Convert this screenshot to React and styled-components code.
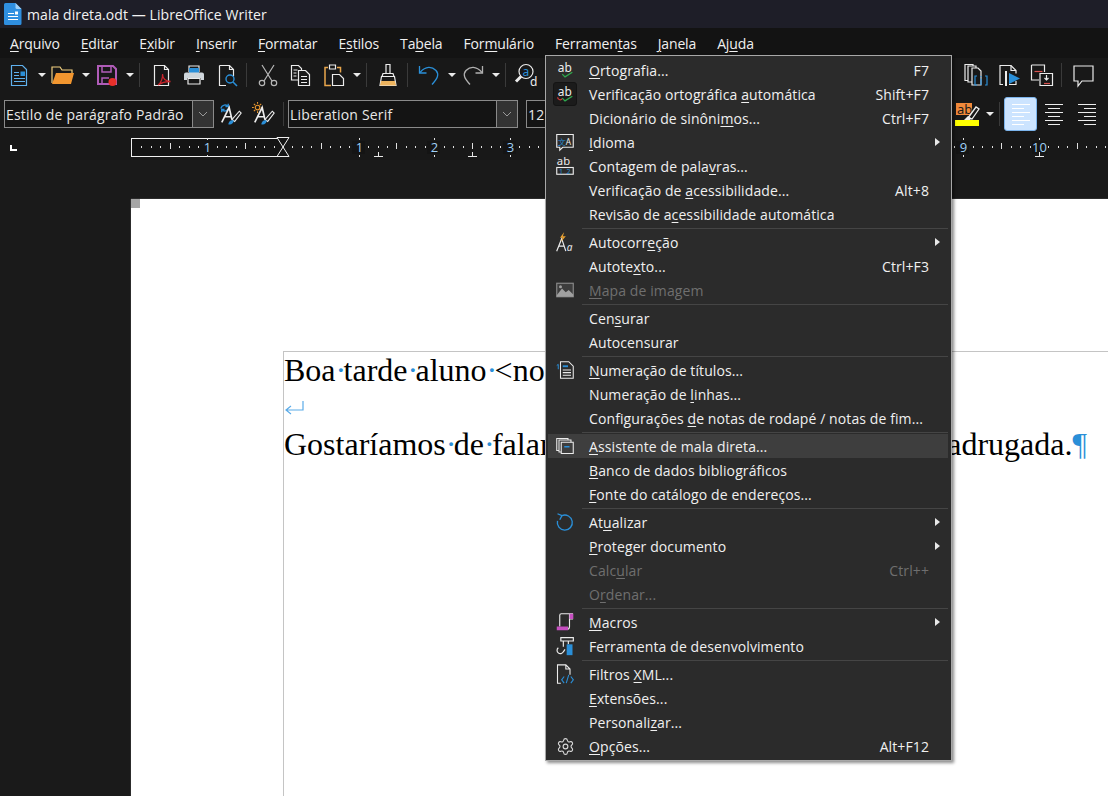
import React from "react";
import styled, { createGlobalStyle } from "styled-components";
import { Settings } from "lucide-react";

const Global = createGlobalStyle`
  html, body { margin: 0; padding: 0; background: #1a1a1a; }
  body { font-family: "Open Sans", "Noto Sans", sans-serif; overflow: hidden; }
`;

const BLUE = "#2a8fd8";
const WHITE = "#ececec";

const Screen = styled.div`
  position: relative;
  width: 1108px;
  height: 796px;
  display: flex;
  flex-direction: column;
  overflow: hidden;
  background: #1a1a1a;
`;

const TitleBar = styled.header`
  height: 28px;
  background: #1e1e28;
  display: flex;
  align-items: center;
  gap: 5px;
  padding-left: 4px;
  color: #f2f2f2;
  font-size: 14px;
  letter-spacing: 0.08px;
`;

const MenuBar = styled.nav`
  height: 30px;
  background: #131313;
  display: flex;
  align-items: center;
  gap: 21px;
  padding-left: 10px;
  color: #f0f0f0;
  font-size: 14px;
  letter-spacing: -0.14px;
`;

const Acc = styled.span`
  text-decoration: underline;
  text-decoration-thickness: 1px;
  text-underline-offset: 2px;
`;

const Toolbar = styled.div`
  display: flex;
  align-items: center;
  justify-content: space-between;
  background: #181818;
  box-sizing: border-box;
  height: ${(p) => p.$h}px;
  padding: ${(p) => p.$t || 0}px ${(p) => p.$r}px 0 ${(p) => p.$l}px;
`;

const ToolGroup = styled.div`
  display: flex;
  align-items: center;
`;

const Btn = styled.div`
  width: ${(p) => p.$w || 24}px;
  height: 24px;
  margin: 0 4px 0 5px;
  flex: none;
  display: flex;
  align-items: center;
  justify-content: center;
`;

const Drop = styled.div`
  width: 10px;
  margin: 0 -1px 0 2px;
  flex: none;
  height: 5px;
  display: flex;
  justify-content: center;
  &::before {
    content: "";
    border-left: 4px solid transparent;
    border-right: 4px solid transparent;
    border-top: 4px solid #eaeaea;
  }
`;

const Sep = styled.div`
  width: 1px;
  height: 24px;
  background: #3a3a3a;
  flex: none;
  margin: 0 ${(p) => p.$r ?? 4}px 0 ${(p) => p.$l ?? 3}px;
`;

const Combo = styled.div`
  width: ${(p) => p.$w}px;
  height: 28px;
  margin-left: ${(p) => p.$ml || 0}px;
  box-sizing: border-box;
  border: 1px solid #8a8a8a;
  display: flex;
  align-items: center;
  flex: none;
  color: #e8e8e8;
  font-size: 14px;
  letter-spacing: 0.18px;
  padding-left: 1px;
  background: #141414;
`;

const ComboText = styled.span`
  flex: 1;
  white-space: nowrap;
  overflow: hidden;
`;

const ComboArrow = styled.div`
  width: 21px;
  height: 26px;
  box-sizing: border-box;
  border-left: 1px solid #8a8a8a;
  background: #333;
  display: flex;
  align-items: center;
  justify-content: center;
  flex: none;
`;

const AlignBtn = styled.div`
  width: 33px;
  height: 34px;
  box-sizing: border-box;
  flex: none;
  display: flex;
  align-items: center;
  justify-content: center;
  border-radius: 3px;
  background: ${(p) => (p.$on ? "#cce4ff" : "transparent")};
  border: 1px solid ${(p) => (p.$on ? "#7cb4ec" : "transparent")};
`;

const RulerRow = styled.div`
  height: 28px;
  background: #181818;
  flex: none;
`;

const Workspace = styled.main`
  flex: 1;
  display: flex;
  padding: 39px 0 0 131px;
  background: #1a1a1a;
  min-height: 0;
`;

const Page = styled.section`
  flex: 1;
  position: relative;
  background: #fff;
  padding: 152px 0 0 152px;
  box-shadow: 0 -1px 0 #2c2c2c, -1px 0 0 #2c2c2c;
`;

const Corner = styled.div`
  position: absolute;
  left: 0;
  top: 0;
  width: 9px;
  height: 9px;
  background: #a6a6a6;
`;

const Frame = styled.div`
  height: 100%;
  box-sizing: border-box;
  border-top: 1px solid #c4c4c4;
  border-left: 1px solid #c4c4c4;
  font-family: "Liberation Serif", serif;
  font-size: 32px;
  color: #000;
`;

const Line = styled.div`
  height: 37px;
  line-height: 37px;
  white-space: nowrap;
  display: flex;
  justify-content: space-between;
  width: ${(p) => p.$w || "auto"};
`;

const Dot = styled.span`
  display: inline-block;
  width: 8px;
  text-align: center;
  color: ${BLUE};
`;

const Pilcrow = styled.span`
  color: ${BLUE};
`;

const BreakRow = styled.div`
  height: 37px;
  display: flex;
  align-items: center;
  padding-left: 1px;
`;

const Menu = styled.div`
  position: absolute;
  left: 545px;
  top: 55px;
  width: 407px;
  box-sizing: border-box;
  padding: 3px 3px 2px 2px;
  background: #2b2b2b;
  border: 1px solid #a8a8a8;
  box-shadow: 2px 2px 3px rgba(0, 0, 0, 0.45);
  color: #f0f0f0;
  font-size: 14px;
  letter-spacing: 0.1px;
`;

const Row = styled.div`
  height: 24px;
  display: flex;
  align-items: center;
  margin-top: ${(p) => (p.$first ? -1 : 0)}px;
  color: ${(p) => (p.$off ? "#6f6f6f" : "inherit")};
  background: ${(p) => (p.$hover ? "#3e3e3e" : "transparent")};
`;

const IconSlot = styled.div`
  width: 24px;
  height: 24px;
  margin: 0 12px 0 5px;
  flex: none;
  box-sizing: border-box;
  display: flex;
  align-items: center;
  justify-content: center;
  border-radius: 3px;
  background: ${(p) => (p.$checked ? "#1b1b1b" : "transparent")};
  border: 1px solid ${(p) => (p.$checked ? "#141414" : "transparent")};
`;

const Label = styled.span`
  flex: 1;
  white-space: nowrap;
`;

const Shortcut = styled.span`
  margin-right: 19px;
  white-space: nowrap;
`;

const Arrow = styled.span`
  width: 0;
  height: 0;
  margin-right: 8px;
  border-top: 4px solid transparent;
  border-bottom: 4px solid transparent;
  border-left: 5px solid #e8e8e8;
`;

const Divider = styled.div`
  height: 1px;
  margin: 1.5px 0 1.5px 34px;
  background: #454545;
`;

const Icon = ({ s = 24, children }) => (
  <svg width={s} height={s} viewBox="0 0 24 24" fill="none" stroke={WHITE} strokeWidth="1.2" overflow="visible">
    {children}
  </svg>
);

const Glyph = ({ x, y, size = 10, fill = WHITE, children, italic }) => (
  <text x={x} y={y} fontSize={size} fill={fill} stroke="none" fontFamily="Noto Sans, sans-serif" fontStyle={italic ? "italic" : "normal"}>
    {children}
  </text>
);

const DocIcon = () => (
  <svg width="18" height="22" viewBox="0 0 18 22">
    <path d="M1.5 0h10L17.5 6v14.5a1.5 1.5 0 0 1-1.5 1.5H1.5A1.5 1.5 0 0 1 0 20.5V1.5A1.5 1.5 0 0 1 1.5 0z" fill="#2f8fe0" />
    <path d="M11.5 0v4.5A1.5 1.5 0 0 0 13 6h4.5z" fill="#9fd0f7" />
    <path d="M4 10.5h6M4 13.5h10M4 16.5h10" stroke="#fff" strokeWidth="1.2" />
    <rect x="11" y="8.5" width="3" height="3" fill="#fff" />
  </svg>
);

const NewDoc = () => (
  <Icon>
    <path d="M4.5 2.5h11l4 4v16h-15z" stroke="#5fb1ee" />
    <path d="M7 9.5h5M7 12.5h5M7 15.5h11M7 18.5h11" stroke="#5fb1ee" />
    <rect x="13.5" y="8.5" width="4.5" height="4.5" fill="#2a8fd8" stroke="none" />
  </Icon>
);

const OpenIcon = () => (
  <Icon>
    <path d="M1 20V4h8l2 3h10v3" stroke="#f2d080" fill="none" />
    <path d="M5 10h18l-3 11H1z" fill="#f2962f" stroke="none" />
  </Icon>
);

const SaveIcon = () => (
  <Icon>
    <path d="M3 3h15l3 3v15H3z" stroke="#b05cb8" strokeWidth="2" fill="none" />
    <path d="M7 3v6h9V3" stroke="#b05cb8" strokeWidth="1.5" />
    <path d="M7 21v-6h7" stroke="#b05cb8" strokeWidth="1.5" />
    <circle cx="17.5" cy="19" r="4" fill="#e8302a" stroke="none" />
  </Icon>
);

const PdfIcon = () => (
  <Icon>
    <path d="M5.5 2.5h10l4 4v16h-14z" />
    <path d="M15.5 2.5v4h4" />
    <path d="M9 22c3-2 5-7 4.500-11 0 4 3 7 8 7.500-5 0-9 1-12.500 3.500z" stroke="#c8252c" strokeWidth="1.3" fill="#181818" />
  </Icon>
);

const PrintIcon = () => (
  <Icon>
    <path d="M7 9V3h10v6" stroke={WHITE} />
    <rect x="7" y="5" width="10" height="5" fill="#2a8fd8" stroke="none" />
    <path d="M4 9.500h16a2 2 0 0 1 2 2V17h-3v-2H5v2H2v-5.500a2 2 0 0 1 2-2z" fill="#cfd6db" stroke="none" />
    <path d="M6 15.500h12V21H6z" />
  </Icon>
);

const PreviewIcon = () => (
  <Icon>
    <path d="M4.500 2.500h10l4 4v7M11 22.500H4.500v-20" />
    <path d="M14.500 2.500v4h4" />
    <circle cx="15" cy="16" r="4" stroke={BLUE} strokeWidth="1.4" />
    <path d="M18 19l4 4" stroke={BLUE} strokeWidth="1.6" />
  </Icon>
);

const ScissorsIcon = () => (
  <Icon>
    <g stroke="#b8b8b8" strokeWidth="1.2">
      <path d="M6 2l10 16M18 2L8 18" />
      <circle cx="6" cy="20" r="2.700" />
      <circle cx="18" cy="20" r="2.700" />
    </g>
  </Icon>
);

const CopyIcon = () => (
  <Icon>
    <path d="M9 17H2.500V2.500h7l3 3v2" />
    <path d="M9.500 7.500h7l4 4v11h-11z" />
    <path d="M4.500 7h4M4.500 10h3M4.500 13h3M12 13.500h6M12 16.500h6M12 19.500h6" />
  </Icon>
);

const PasteIcon = () => (
  <Icon>
    <path d="M9 22.500H3V4.500h3M15 4.500h3.500v5" stroke="#e9a64c" strokeWidth="1.500" />
    <path d="M7.500 2h6v4h-6z" stroke={WHITE} />
    <path d="M10.500 11.500h7l4 4v7h-11z" stroke={WHITE} fill="#181818" />
  </Icon>
);

const BrushIcon = () => (
  <Icon>
    <path d="M10 1.500h4v9h-4z" stroke={WHITE} />
    <path d="M7 10.500h10l1 3H6z" stroke={WHITE} fill="#181818" />
    <path d="M5.500 13.500h13l1.500 9H4z" stroke={WHITE} fill="#181818" />
    <path d="M5 18h14l1 4.500H4z" fill="#eeb45e" stroke="none" />
  </Icon>
);

const UndoIcon = ({ stroke = BLUE, flip }) => (
  <Icon>
    <g transform={flip ? "translate(24 0) scale(-1 1)" : undefined} stroke={stroke} strokeWidth="1.300">
      <path d="M3 9.500c6-7 12-6 16-2 3.500 4 1.500 8-4 14" />
      <path d="M2.500 3v7h7" />
    </g>
  </Icon>
);

const FindIcon = () => (
  <Icon>
    <circle cx="11" cy="8.500" r="7" />
    <path d="M6 13.500l-5 5" strokeWidth="3" />
    <Glyph x="7.500" y="12.500" size="12" fill={BLUE}>a</Glyph>
    <Glyph x="15" y="22.500" size="12">d</Glyph>
  </Icon>
);

const CombineIcon = () => (
  <Icon>
    <path d="M1 1.500h8v16H1z" />
    <path d="M4 3h8v16H4z" fill="#181818" />
    <path d="M8 5h6l3 3v14H8z" fill="#181818" />
    <path d="M13 13h-2v9h2M21 13h2v9h-2M17 13v1M17 15.500V22" stroke={BLUE} />
  </Icon>
);

const ShowIcon = () => (
  <Icon>
    <path d="M6 21.500H3v-19h11l5 5v3M19 18v3.500h-7" />
    <path d="M14 2.500v5h5" />
    <path d="M9 8v15" strokeWidth="2" />
    <path d="M12 10l11 5.500-11 5.500z" fill={BLUE} stroke="none" />
  </Icon>
);

const LinkIcon = () => (
  <Icon>
    <path d="M1.500 2h13v7M9 17H1.500V2" />
    <path d="M4.500 8.500h8" stroke="#d9534f" />
    <path d="M10 10.500h12.500v12H10z" fill="#181818" />
    <path d="M14 20.500h6" stroke="#d9534f" />
    <path d="M16.500 12v5M14.500 15l2 2 2-2" />
  </Icon>
);

const CommentIcon = () => (
  <Icon>
    <path d="M3 3h19v15H11l-4 5v-5H3z" />
  </Icon>
);

const UpdateStyleIcon = ({ burst }) => (
  <svg width="26" height="26" viewBox="0 0 26 26" fill="none" stroke={WHITE} strokeWidth="1.200">
    {burst ? (
      <g stroke="#e8962e">
        <circle cx="6" cy="6" r="2.500" />
        <path d="M6 0v2M6 10v2M0 6h2M10 6h2M2 2l1.500 1.500M9 9l1 1M10 2L8.500 3.500M2 10l1.500-1.500" />
      </g>
    ) : (
      <g stroke={BLUE} strokeWidth="1.500">
        <path d="M2 7c1-4 6-5 8-2M11 6c-1 4-6 5-8 2" />
        <path d="M10 2v3H7M3 11V8h3" />
      </g>
    )}
    <path d="M3 22L11 6l3 13M6 16h8" strokeWidth="1.800" />
    <path d="M14 19l8-9 2 2-7 9z" fill="#181818" />
    <path d="M10 24c1-4 3-5 6-4 0 3-3 5-6 4z" fill={BLUE} stroke="none" />
  </svg>
);

const HighlightIcon = () => (
  <svg width="26" height="24" viewBox="0 0 26 24" overflow="visible">
    <rect x="3" y="1" width="16" height="12" fill="#f0893a" />
    <text x="4" y="12" fontSize="13" fill="#1a1a1a" fontFamily="Noto Sans, sans-serif">ab</text>
    <path d="M15 16l8-11 3 2-7 10z" fill="#181818" stroke="#eee" strokeWidth="1.300" />
    <path d="M11 18l4-4 3 2-1 2z" fill="#eee" />
    <rect x="2" y="18" width="24" height="6" fill="#ffff00" />
  </svg>
);

const AlignIcon = ({ mode, on }) => {
  const c = on ? "#fff" : "#ececec";
  return (
    <svg width="20" height="22" viewBox="0 0 20 22">
      {[0, 1, 2, 3, 4, 5].map((i) => {
        const width = i % 2 === 0 ? 18 : 12;
        const px = mode === "left" ? 1 : mode === "center" ? 10 - width / 2 : 19 - width;
        return <rect key={i} x={px} y={1 + i * 4} width={width} height="1" fill={c} />;
      })}
    </svg>
  );
};

const Chevron = () => (
  <svg width="10" height="6" viewBox="0 0 10 6" fill="none" stroke="#9a9a9a" strokeWidth="1">
    <path d="M1 1l4 4 4-4" />
  </svg>
);

const AbIcon = ({ red }) => (
  <Icon s={22}>
    <Glyph x="4" y="14" size="13">ab</Glyph>
    {red && <path d="M4 15.500c0 3.500 4 3.500 5 1.500" stroke="#d8383a" strokeWidth="1.300" />}
    <path d="M9 16.500l3 3 8-5" stroke="#2fa84f" strokeWidth="1.400" />
  </Icon>
);

const LangIcon = () => (
  <Icon s={18}>
    <path d="M1 2h22v17H9l-4 4v-4H1z" strokeWidth="1.500" />
    <Glyph x="2.500" y="15.500" size="11" fill={BLUE}>文</Glyph>
    <Glyph x="13" y="15.500" size="11">A</Glyph>
  </Icon>
);

const CountIcon = () => (
  <Icon s={18}>
    <Glyph x="1" y="10.500" size="15">ab</Glyph>
    <rect x="1" y="14" width="22" height="9" strokeWidth="1.500" />
    <Glyph x="4" y="22.500" size="9.500" fill={BLUE}>1</Glyph>
    <Glyph x="14" y="22.500" size="9.500" fill={BLUE}>2</Glyph>
  </Icon>
);

const AutoIcon = () => (
  <Icon s={20}>
    <path d="M2 23L8 8l5 15M4.500 17h7" strokeWidth="1.400" />
    <path d="M11 0L6 7h3L7 12l6-7H9.500z" fill="#e8a030" stroke="none" />
    <Glyph x="14" y="22.500" size="12" italic>a</Glyph>
  </Icon>
);

const ImageIcon = () => (
  <Icon s={18}>
    <rect x="1" y="3" width="22" height="18" stroke="#8c8c8c" fill="#3d3d3d" strokeWidth="1.500" />
    <path d="M1 19l7-9 5 5 4-3 6 6v3H1z" fill="#a0a0a0" stroke="none" />
    <circle cx="6" cy="7.500" r="2" fill="#a0a0a0" stroke="none" />
  </Icon>
);

const OutlineIcon = () => (
  <Icon s={18}>
    <path d="M6 1h11l6 6v16H6z" strokeWidth="1.400" />
    <path d="M9 7h7" stroke={BLUE} strokeWidth="2.500" />
    <path d="M9 12h11M9 15.500h11M9 19h11" strokeWidth="1.400" />
    <path d="M1 6l2-1.500V11" stroke={BLUE} strokeWidth="1.300" />
  </Icon>
);

const MergeIcon = () => (
  <Icon s={18}>
    <path d="M1 2h15v16H1z" strokeWidth="1.400" />
    <path d="M4 4h16v16H4z" fill="#3e3e3e" strokeWidth="1.400" />
    <path d="M7 7h16v15H7z" fill="#3e3e3e" strokeWidth="1.400" />
    <path d="M11 13h7" stroke={BLUE} strokeWidth="2" />
  </Icon>
);

const RefreshIcon = () => (
  <Icon s={18}>
    <path d="M8 3.500a10 10 0 1 1-6 7" stroke={BLUE} strokeWidth="1.800" />
    <path d="M2 1l6 2.500L5 9" stroke={BLUE} strokeWidth="1.800" />
  </Icon>
);

const MacroIcon = () => (
  <Icon s={18}>
    <path d="M5 18V3a2 2 0 0 1 2-2h15v7h-4M18 1v17a4 4 0 0 1-4 4" strokeWidth="1.500" />
    <path d="M1 18h15v5H1z" fill="#c64fc0" stroke="none" />
    <path d="M18 1h5v7h-5z" fill="#c64fc0" stroke="none" />
  </Icon>
);

const DevIcon = () => (
  <Icon s={20}>
    <path d="M7 2h15v4H7zM10 6v7M4 14a4 4 0 1 0 6 5l2-3" strokeWidth="1.400" />
    <path d="M16 6v4" strokeWidth="1.400" />
    <rect x="14" y="10" width="7" height="13" fill={BLUE} stroke="none" />
  </Icon>
);

const XmlIcon = () => (
  <Icon s={20}>
    <path d="M7 23H3V1h10l5 5v7M13 1v5h5" strokeWidth="1.300" />
    <path d="M11 15l-3 4 3 4M19 15l3 4-3 4M16.500 13l-3 10" stroke={BLUE} strokeWidth="1.300" />
  </Icon>
);

const MENU = [
  { parts: ["", "O", "rtografia..."], key: "F7", icon: <AbIcon /> },
  { parts: ["Verificação ortográfica ", "a", "utomática"], key: "Shift+F7", icon: <AbIcon red />, checked: true },
  { parts: ["Dicionário de sinôni", "m", "os..."], key: "Ctrl+F7" },
  { parts: ["", "I", "dioma"], sub: true, icon: <LangIcon /> },
  { parts: ["Contagem de pala", "v", "ras..."], icon: <CountIcon /> },
  { parts: ["Verificação de ", "a", "cessibilidade..."], key: "Alt+8" },
  { parts: ["Revisão de a", "c", "essibilidade automática"] },
  "sep",
  { parts: ["Autocorr", "e", "ção"], sub: true, icon: <AutoIcon /> },
  { parts: ["Autote", "x", "to..."], key: "Ctrl+F3" },
  { parts: ["", "M", "apa de imagem"], off: true, icon: <ImageIcon /> },
  "sep",
  { parts: ["Cen", "s", "urar"] },
  { parts: ["Autocensurar"] },
  "sep",
  { parts: ["", "N", "umeração de títulos..."], icon: <OutlineIcon /> },
  { parts: ["Numeração de ", "l", "inhas..."] },
  { parts: ["Configurações ", "d", "e notas de rodapé / notas de fim..."] },
  "sep",
  { parts: ["", "A", "ssistente de mala direta..."], hover: true, icon: <MergeIcon /> },
  { parts: ["", "B", "anco de dados bibliográficos"] },
  { parts: ["", "F", "onte do catálogo de endereços..."] },
  "sep",
  { parts: ["At", "u", "alizar"], sub: true, icon: <RefreshIcon /> },
  { parts: ["", "P", "roteger documento"], sub: true },
  { parts: ["Calc", "u", "lar"], key: "Ctrl++", off: true },
  { parts: ["O", "r", "denar..."], off: true },
  "sep",
  { parts: ["", "M", "acros"], sub: true, icon: <MacroIcon /> },
  { parts: ["Ferramenta de desenvolvimento"], icon: <DevIcon /> },
  "sep",
  { parts: ["Filtros ", "X", "ML..."], icon: <XmlIcon /> },
  { parts: ["", "E", "xtensões..."] },
  { parts: ["Personali", "z", "ar..."] },
  { parts: ["", "O", "pções..."], key: "Alt+F12", icon: <Settings size={19} color="#d8d8d8" strokeWidth={1.4} /> },
];

const TOP_MENU = [
  ["", "A", "rquivo"],
  ["", "E", "ditar"],
  ["E", "x", "ibir"],
  ["", "I", "nserir"],
  ["", "F", "ormatar"],
  ["E", "s", "tilos"],
  ["Ta", "b", "ela"],
  ["For", "m", "ulário"],
  ["Ferramen", "t", "as"],
  ["", "J", "anela"],
  ["Aj", "u", "da"],
];

const Mnemonic = ({ parts }) =>
  parts.length === 1 ? (
    parts[0]
  ) : (
    <>
      {parts[0]}
      <Acc>{parts[1]}</Acc>
      {parts[2]}
    </>
  );

const Ruler = () => {
  const zero = 283;
  const unit = 75.6;
  const marks = [];
  for (let i = -16; i <= 88; i++) {
    const x = zero + (i * unit) / 8;
    if (x < 133 || x > 1108) continue;
    if (i % 8 === 0) continue;
    const long = i % 4 === 0;
    marks.push(<rect key={i} x={Math.round(x)} y={long ? 11 : 14} width="1" height={long ? 6 : 2} fill="#e0e0e0" />);
  }
  const nums = [[-1, "1"], [1, "1"], [2, "2"], [3, "3"], [4, "4"], [5, "5"], [6, "6"], [7, "7"], [8, "8"], [9, "9"], [10, "10"]];
  const tabs = [];
  for (let k = 1; k <= 8; k++) tabs.push(Math.round(zero + 94.5 * k));
  return (
    <svg width="1108" height="28" viewBox="0 0 1108 28" style={{ display: "block" }}>
      <path d="M11 13v5h6" stroke="#fff" strokeWidth="2" fill="none" />
      <rect x="131.500" y="6.500" width="152" height="18" stroke="#f0f0f0" fill="#141414" />
      {marks}
      {nums.map(([n, t]) => {
        const x = Math.round(zero + n * unit);
        return (
          <g key={n}>
            <rect x={x} y="6" width="1" height="2" fill="#e0e0e0" />
            <rect x={x} y="23" width="1" height="2" fill="#e0e0e0" />
            <rect x={x - 7} y="9" width={t.length > 1 ? 15 : 13} height="13" fill="#141414" />
            <text x={x + 0.5} y="20" fontSize="13" textAnchor="middle" fill="#9fd0f5" fontFamily="Open Sans, sans-serif">{t}</text>
          </g>
        );
      })}
      {tabs.map((x) => (
        <path key={x} d={`M${x - 4} 24.500h9M${x + 0.500} 24v-4`} stroke="#e8e8e8" fill="none" />
      ))}
      <path d="M277 5.500h12l-6 9.500 6 9.500h-12l6-9.500z" fill="#141414" stroke="#f0f0f0" />
    </svg>
  );
};

export default function App() {
  return (
    <Screen>
      <Global />
      <TitleBar>
        <DocIcon />
        <span>mala direta.odt — LibreOffice Writer</span>
      </TitleBar>
      <MenuBar>
        {TOP_MENU.map((p) => (
          <span key={p.join("")}>
            <Mnemonic parts={p} />
          </span>
        ))}
      </MenuBar>
      <Toolbar $h={34} $l={2} $r={9}>
        <ToolGroup>
          <Btn><NewDoc /></Btn><Drop />
          <Btn><OpenIcon /></Btn><Drop />
          <Btn><SaveIcon /></Btn><Drop />
          <Sep $l={5} />
          <Btn><PdfIcon /></Btn>
          <Btn><PrintIcon /></Btn>
          <Btn><PreviewIcon /></Btn>
          <Sep />
          <Btn><ScissorsIcon /></Btn>
          <Btn><CopyIcon /></Btn>
          <Btn><PasteIcon /></Btn><Drop />
          <Sep $l={5} />
          <Btn><BrushIcon /></Btn>
          <Sep />
          <Btn><UndoIcon /></Btn><Drop />
          <Btn><UndoIcon flip stroke="#b0b0b0" /></Btn><Drop />
          <Sep $l={5} />
          <Btn><FindIcon /></Btn>
        </ToolGroup>
        <ToolGroup>
          <Btn><CombineIcon /></Btn>
          <Btn><ShowIcon /></Btn>
          <Btn><LinkIcon /></Btn>
          <Sep />
          <Btn><CommentIcon /></Btn>
        </ToolGroup>
      </Toolbar>
      <Toolbar $h={40} $t={4} $l={4} $r={5}>
        <ToolGroup>
          <Combo $w={210}>
            <ComboText>Estilo de parágrafo Padrão</ComboText>
            <ComboArrow><Chevron /></ComboArrow>
          </Combo>
          <Btn><UpdateStyleIcon /></Btn>
          <Btn><UpdateStyleIcon burst /></Btn>
          <Sep $l={3} />
          <Combo $w={230}>
            <ComboText>Liberation Serif</ComboText>
            <ComboArrow><Chevron /></ComboArrow>
          </Combo>
          <Combo $w={60} $ml={8}>
            <ComboText>12</ComboText>
          </Combo>
        </ToolGroup>
        <ToolGroup>
          <Btn $w={26}><HighlightIcon /></Btn>
          <Drop />
          <Sep $l={5} />
          <AlignBtn $on><AlignIcon mode="left" on /></AlignBtn>
          <AlignBtn><AlignIcon mode="center" /></AlignBtn>
          <AlignBtn><AlignIcon mode="right" /></AlignBtn>
        </ToolGroup>
      </Toolbar>
      <RulerRow><Ruler /></RulerRow>
      <Workspace>
        <Page>
          <Corner />
          <Frame>
            <Line>
              <span>Boa<Dot>·</Dot>tarde<Dot>·</Dot>aluno<Dot>·</Dot>&lt;nome&gt;</span>
            </Line>
            <BreakRow>
              <svg width="19" height="14" viewBox="0 0 19 14" fill="none" stroke="#5aabe8" strokeWidth="1.200">
                <path d="M18 0v9H1M6 5L1 9l5 4" />
              </svg>
            </BreakRow>
            <Line $w="803px">
              <span>Gostaríamos<Dot>·</Dot>de<Dot>·</Dot>falar<Dot>·</Dot>sobre<Dot>·</Dot>as<Dot>·</Dot>aulas</span>
              <span>da<Dot>·</Dot>madrugada.<Pilcrow>¶</Pilcrow></span>
            </Line>
          </Frame>
        </Page>
      </Workspace>
      <Menu>
        {MENU.map((m, i) =>
          m === "sep" ? (
            <Divider key={i} />
          ) : (
            <Row key={i} $first={i === 0} $off={m.off} $hover={m.hover}>
              <IconSlot $checked={m.checked}>{m.icon}</IconSlot>
              <Label><Mnemonic parts={m.parts} /></Label>
              {m.key && <Shortcut>{m.key}</Shortcut>}
              {m.sub && <Arrow />}
            </Row>
          )
        )}
      </Menu>
    </Screen>
  );
}
